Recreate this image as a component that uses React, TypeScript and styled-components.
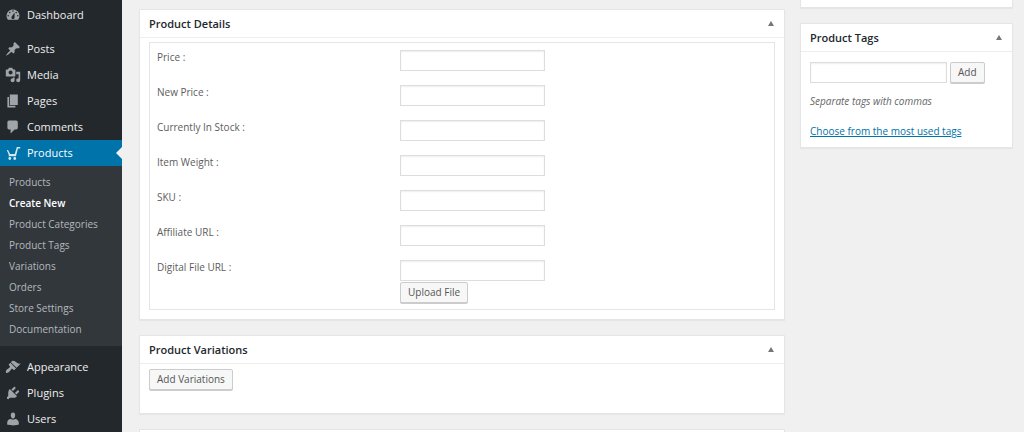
import React, { useId } from "react";
import styled, { createGlobalStyle } from "styled-components";

const GlobalStyle = createGlobalStyle`
  * { box-sizing: border-box; }
  html, body { margin: 0; height: 100%; }
  #root { height: 100%; }
  body {
    background: #f0f0f0;
    color: #5c5c5c;
    font-family: "Open Sans", "Noto Sans", sans-serif;
    font-size: 10px;
    line-height: 14px;
    overflow: hidden;
  }
`;

const Page = styled.div`
  display: grid;
  grid-template-columns: 122px 1fr;
  min-height: 100%;
`;

const Sidebar = styled.nav`
  background: #23282d;
  padding-top: 2px;
`;

const MenuList = styled.ul`
  list-style: none;
  margin: 0;
  padding: 0;
`;

const MenuItem = styled.li<{ $gap?: boolean }>`
  margin-top: ${(p) => (p.$gap ? "8px" : "0")};
`;

const MenuLink = styled.a<{ $active?: boolean }>`
  position: relative;
  display: flex;
  align-items: center;
  gap: 6px;
  height: 26px;
  padding-left: 5px;
  background: ${(p) => (p.$active ? "#0073aa" : "transparent")};
  color: ${(p) => (p.$active ? "#fff" : "#eee")};
  font-size: 11px;
  line-height: 16px;
  text-decoration: none;

  &::after {
    content: "";
    display: ${(p) => (p.$active ? "block" : "none")};
    position: absolute;
    right: 0;
    top: 7px;
    border: 6px solid transparent;
    border-left-width: 0;
    border-right-color: #f0f0f0;
  }
`;

const MenuIcon = styled.svg<{ $active?: boolean }>`
  width: 16px;
  height: 16px;
  flex: none;
  fill: ${(p) => (p.$active ? "#d5e6f0" : "#a0a5aa")};
`;

const SubMenu = styled.ul`
  list-style: none;
  margin: 0;
  padding: 6px 0;
  background: #32373c;
`;

const SubLink = styled.a<{ $current?: boolean }>`
  display: block;
  padding: 0 9px;
  color: ${(p) => (p.$current ? "#fff" : "#b4b9be")};
  font-size: 10px;
  font-weight: ${(p) => (p.$current ? 600 : 400)};
  line-height: 21px;
  text-decoration: none;
  white-space: nowrap;
`;

const Content = styled.main`
  display: grid;
  grid-template-columns: minmax(0, 1fr) 213px;
  align-items: start;
  gap: 15px;
  padding: 0 11px 0 17px;
`;

const Column = styled.div<{ $top?: number }>`
  display: flex;
  flex-direction: column;
  gap: 15px;
  padding-top: ${(p) => p.$top ?? 0}px;
`;

const Panel = styled.section`
  background: #fff;
  border: 1px solid #e5e5e5;
  box-shadow: 0 1px 1px rgba(0, 0, 0, 0.04);
`;

const PanelTail = styled(Panel)`
  height: 8px;
  border-top: 0;
`;

const PanelHead = styled.header`
  display: flex;
  align-items: center;
  justify-content: space-between;
  height: 28px;
  padding: 0 10px 0 9px;
  border-bottom: 1px solid #eee;
`;

const PanelTitle = styled.h2`
  margin: 0;
  color: #23282d;
  font-size: 11px;
  font-weight: 600;
  line-height: 16px;
`;

const Toggle = styled.button`
  display: flex;
  padding: 0;
  border: 0;
  background: none;
`;

const Caret = styled.svg`
  width: 6px;
  height: 5px;
  fill: #72777c;
`;

const PanelBody = styled.div<{ $pad: string }>`
  padding: ${(p) => p.$pad};
`;

const Fields = styled.div`
  display: flex;
  flex-direction: column;
  gap: 14px;
  padding: 7px 7px 6px;
  border: 1px solid #e5e5e5;
`;

const FieldRow = styled.div`
  display: grid;
  grid-template-columns: 243px 1fr;
  align-items: start;
`;

const FieldCell = styled.div`
  display: flex;
  flex-direction: column;
  align-items: flex-start;
  gap: 1px;
`;

const TextInput = styled.input`
  width: 145px;
  height: 21px;
  margin: 0;
  padding: 2px 4px;
  border: 1px solid #ddd;
  background: #fff;
  box-shadow: inset 0 1px 2px rgba(0, 0, 0, 0.07);
  color: #32373c;
  font: inherit;
`;

const TagInput = styled(TextInput)`
  width: 137px;
`;

const Button = styled.button`
  display: block;
  height: 21px;
  padding: 0 7px;
  border: 1px solid #ccc;
  border-radius: 2px;
  background: #f7f7f7;
  box-shadow: 0 1px 0 #ccc;
  color: #555;
  font: inherit;
  line-height: 19px;
  white-space: nowrap;
`;

const TagForm = styled.div`
  display: flex;
  gap: 3px;
`;

const Hint = styled.p`
  margin: 11px 0 16px;
  color: #666;
  font-style: italic;
`;

const TagLink = styled.a`
  display: block;
  color: #0073aa;
`;

const icons = {
  dashboard:
    "M3.76 16h12.48A7.998 7.998 0 0 0 10 3a7.998 7.998 0 0 0-6.24 13zM10 4c.55 0 1 .45 1 1s-.45 1-1 1-1-.45-1-1 .45-1 1-1zM6 6c.55 0 1 .45 1 1s-.45 1-1 1-1-.45-1-1 .45-1 1-1zm8 0c.55 0 1 .45 1 1s-.45 1-1 1-1-.45-1-1 .45-1 1-1zm-5.37 5.55L12 7v6c0 1.1-.9 2-2 2s-2-.9-2-2c0-.57.24-1.08.63-1.45zM4 10c.55 0 1 .45 1 1s-.45 1-1 1-1-.45-1-1 .45-1 1-1zm12 0c.55 0 1 .45 1 1s-.45 1-1 1-1-.45-1-1 .45-1 1-1z",
  pin: "M10.44 3.02l1.82-1.82 6.36 6.35-1.83 1.82c-1.05-.68-2.48-.57-3.41.36l-.75.75c-.92.93-1.04 2.35-.35 3.41l-1.83 1.82-2.41-2.41-2.8 2.79c-.42.42-3.38 2.71-3.8 2.29s1.86-3.39 2.28-3.81l2.79-2.79L4.1 9.36l1.83-1.82c1.05.69 2.48.57 3.4-.36l.75-.75c.93-.92 1.05-2.35.36-3.41z",
  media:
    "M13 11V4c0-.55-.45-1-1-1h-1.67L9 1H5L3.67 3H2c-.55 0-1 .45-1 1v7c0 .55.45 1 1 1h10c.55 0 1-.45 1-1zM7 4.5c1.38 0 2.5 1.12 2.5 2.5S8.38 9.5 7 9.5 4.5 8.38 4.5 7 5.62 4.5 7 4.5zM14 6h5v10.5c0 1.38-1.12 2.5-2.5 2.5S14 17.88 14 16.5s1.12-2.5 2.5-2.5c.17 0 .34.02.5.05V9h-3V6zm-4 8.05V13h2v3.5c0 1.38-1.12 2.5-2.5 2.5S7 17.88 7 16.5 8.12 14 9.5 14c.17 0 .34.02.5.05z",
  pages: "M6 15V2h10v13H6zm-1 1h8v2H3V5h2v11z",
  comment:
    "M5 2h9c1.1 0 2 .9 2 2v7c0 1.1-.9 2-2 2h-2l-5 5v-5H5c-1.1 0-2-.9-2-2V4c0-1.1.9-2 2-2z",
  cart: "M14.8 2.4H19v1.9h-2.8l-2.5 9.9H4.6v-2.4L2.2 6.4h1.6l2.6 4.8h5.8zM6 15a1.8 1.8 0 1 1 0 3.6A1.8 1.8 0 0 1 6 15zm6.2 0a1.8 1.8 0 1 1 0 3.6 1.8 1.8 0 0 1 0-3.6z",
  brush:
    "M14.48 11.06L7.41 3.99l1.5-1.5c.5-.56 2.3-.47 3.51.32 1.21.8 1.43 1.28 2.91 2.1 1.18.64 2.45 1.26 4.45.85zm-.71.71L6.7 4.7 4.93 6.47c-.39.39-.39 1.02 0 1.41l1.06 1.06c.39.39.39 1.03 0 1.42-.6.6-1.43 1.11-2.21 1.69-.35.26-.7.53-1.01.84C1.43 14.23.4 16.08 1.4 17.07c.99 1 2.84-.03 4.18-1.36.31-.31.58-.66.85-1.02.57-.78 1.08-1.61 1.69-2.21.39-.39 1.02-.39 1.41 0l1.06 1.06c.39.39 1.02.39 1.41 0z",
  plug: "M13.11 4.36L9.87 7.6 8 5.73l3.24-3.24c.35-.34 1.05-.2 1.56.32.52.51.66 1.21.31 1.55zm-8 1.77l.91-1.12 9.01 9.01-1.19.84c-.71.71-2.63 1.16-3.82 1.16H6.14L4.9 17.26c-.59.59-1.54.59-2.12 0-.59-.58-.59-1.53 0-2.12l1.24-1.24v-3.88c0-1.13.4-3.19 1.09-3.89zm7.26 3.97l3.24-3.24c.34-.35 1.04-.21 1.55.31.52.51.66 1.21.31 1.55l-3.24 3.25z",
  user: "M10 9.25c-2.27 0-2.73-3.44-2.73-3.44C7 4.02 7.82 2 9.97 2c2.16 0 2.98 2.02 2.71 3.81 0 0-.41 3.44-2.68 3.44zm0 1.6L12.72 10c2.39 0 4.52 2.33 4.52 4.53v2.49s-3.65 1.13-7.24 1.13c-3.65 0-7.24-1.13-7.24-1.13v-2.49c0-2.25 1.94-4.48 4.47-4.48z",
};

type Entry = {
  label: string;
  icon: keyof typeof icons;
  gap?: boolean;
  children?: string[];
};

const menu: Entry[] = [
  { label: "Dashboard", icon: "dashboard" },
  { label: "Posts", icon: "pin", gap: true },
  { label: "Media", icon: "media" },
  { label: "Pages", icon: "pages" },
  { label: "Comments", icon: "comment" },
  {
    label: "Products",
    icon: "cart",
    children: [
      "Products",
      "Create New",
      "Product Categories",
      "Product Tags",
      "Variations",
      "Orders",
      "Store Settings",
      "Documentation",
    ],
  },
  { label: "Appearance", icon: "brush", gap: true },
  { label: "Plugins", icon: "plug" },
  { label: "Users", icon: "user" },
];

const fields = [
  "Price :",
  "New Price :",
  "Currently In Stock :",
  "Item Weight :",
  "SKU :",
  "Affiliate URL :",
  "Digital File URL :",
];

function Head({ title }: { title: string }) {
  return (
    <PanelHead>
      <PanelTitle>{title}</PanelTitle>
      <Toggle type="button" aria-label={`Toggle panel: ${title}`}>
        <Caret viewBox="0 0 6 5" aria-hidden="true">
          <path d="M3 0l3 5H0z" />
        </Caret>
      </Toggle>
    </PanelHead>
  );
}

function Field({ label, children }: { label: string; children?: React.ReactNode }) {
  const id = useId();
  return (
    <FieldRow>
      <label htmlFor={id}>{label}</label>
      <FieldCell>
        <TextInput id={id} type="text" />
        {children}
      </FieldCell>
    </FieldRow>
  );
}

export default function App() {
  return (
    <>
      <GlobalStyle />
      <Page>
        <Sidebar>
          <MenuList>
            {menu.map(({ label, icon, gap, children }) => (
              <MenuItem key={label} $gap={gap}>
                <MenuLink href="#" $active={!!children}>
                  <MenuIcon viewBox="0 0 20 20" $active={!!children} aria-hidden="true">
                    <path d={icons[icon]} />
                  </MenuIcon>
                  {label}
                </MenuLink>
                {children && (
                  <SubMenu>
                    {children.map((child) => (
                      <li key={child}>
                        <SubLink href="#" $current={child === "Create New"}>
                          {child}
                        </SubLink>
                      </li>
                    ))}
                  </SubMenu>
                )}
              </MenuItem>
            ))}
          </MenuList>
        </Sidebar>
        <Content>
          <Column $top={9}>
            <Panel>
              <Head title="Product Details" />
              <PanelBody $pad="4px 9px 9px">
                <Fields>
                  {fields.map((label) => (
                    <Field key={label} label={label}>
                      {label === "Digital File URL :" && (
                        <Button type="button">Upload File</Button>
                      )}
                    </Field>
                  ))}
                </Fields>
              </PanelBody>
            </Panel>
            <Panel>
              <Head title="Product Variations" />
              <PanelBody $pad="5px 9px 23px">
                <Button type="button">Add Variations</Button>
              </PanelBody>
            </Panel>
            <Panel>
              <Head title="" />
            </Panel>
          </Column>
          <Column>
            <PanelTail />
            <Panel>
              <Head title="Product Tags" />
              <PanelBody $pad="10px 9px 9px">
                <TagForm>
                  <TagInput type="text" aria-label="Product Tags" />
                  <Button type="button">Add</Button>
                </TagForm>
                <Hint>Separate tags with commas</Hint>
                <TagLink href="#">Choose from the most used tags</TagLink>
              </PanelBody>
            </Panel>
          </Column>
        </Content>
      </Page>
    </>
  );
}
